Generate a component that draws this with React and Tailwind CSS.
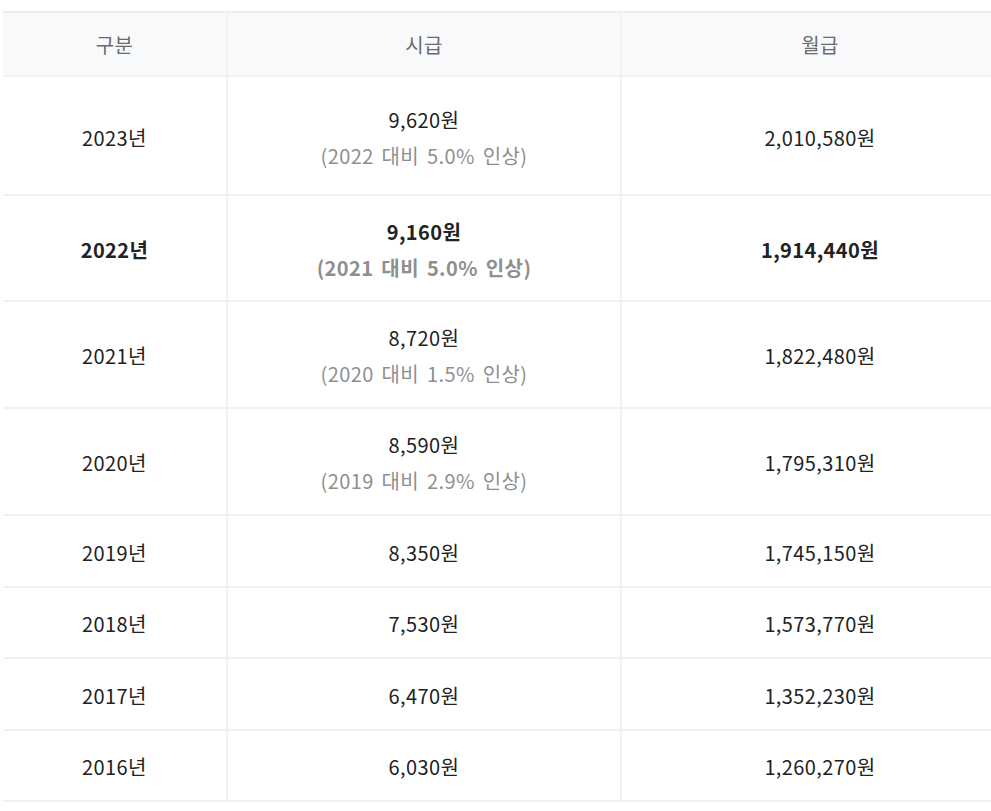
import React from "react";

const rows = [
  { y: "2023년", h: "9,620원", sub: "(2022 대비 5.0% 인상)", m: "2,010,580원", hh: "h-[119px]", pt: "pt-[5px]" },
  { y: "2022년", h: "9,160원", sub: "(2021 대비 5.0% 인상)", m: "1,914,440원", bold: true, hh: "h-[106px]", pt: "pt-[3px]" },
  { y: "2021년", h: "8,720원", sub: "(2020 대비 1.5% 인상)", m: "1,822,480원", hh: "h-[107px]", pt: "pt-[3px]" },
  { y: "2020년", h: "8,590원", sub: "(2019 대비 2.9% 인상)", m: "1,795,310원", hh: "h-[107px]", pt: "pt-[3px]" },
  { y: "2019년", h: "8,350원", m: "1,745,150원", hh: "h-[72px]", pt: "pt-[3px]" },
  { y: "2018년", h: "7,530원", m: "1,573,770원", hh: "h-[71px]", pt: "pt-[3px]" },
  { y: "2017년", h: "6,470원", m: "1,352,230원", hh: "h-[72px]", pt: "pt-[3px]" },
  { y: "2016년", h: "6,030원", m: "1,260,270원", hh: "h-[71px]", pt: "pt-[3px]" },
];

export default function App() {
  return (
    <div className="bg-white w-[991px] h-[811px] pt-[11px] pl-[3px] overflow-hidden" style={{ fontFamily: '"Noto Sans CJK KR", "Noto Sans", sans-serif' }}>
      <div className="w-[1015px] border-t-2 border-[#eceef2] text-[20px] tracking-[0.4px] [word-spacing:3px] text-[#222]">
        <div className="grid grid-cols-[225px_394px_1fr] h-[64px] bg-[#f8f9fb] border-b-2 border-[#f1f1f4] text-[#6b6b6b]">
          <div className="flex items-center justify-center pt-[2px] border-r-2 border-[#f1f1f4]">구분</div>
          <div className="flex items-center justify-center pt-[2px] border-r-2 border-[#f1f1f4]">시급</div>
          <div className="flex items-center justify-center pt-[2px]">월급</div>
        </div>
        {rows.map((r, i) => (
          <div key={i} className={`grid grid-cols-[225px_394px_1fr] ${r.hh} border-b-2 border-[#f1f1f4] ${r.bold ? "font-bold" : ""}`}>
            <div className={`flex items-center justify-center border-r-2 border-[#f1f1f4] ${r.pt}`}>{r.y}</div>
            <div className={`flex flex-col items-center justify-center border-r-2 border-[#f1f1f4] leading-[36px] ${r.pt}`}>
              <div>{r.h}</div>
              {r.sub && <div className="text-[#8f8f8f]">{r.sub}</div>}
            </div>
            <div className={`flex items-center justify-center ${r.pt}`}>{r.m}</div>
          </div>
        ))}
      </div>
    </div>
  );
}
